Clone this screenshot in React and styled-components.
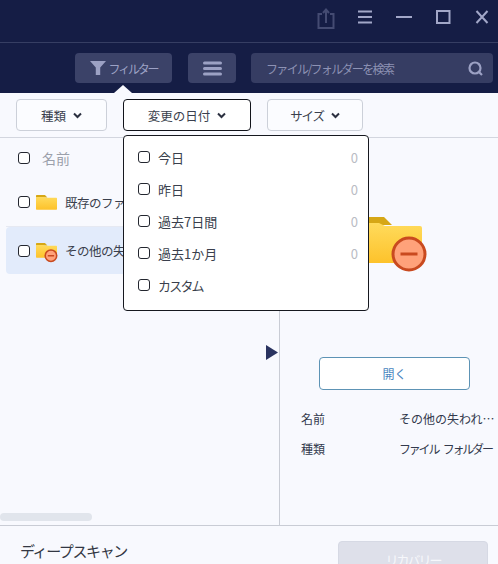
import styled, { createGlobalStyle } from "styled-components";

const GlobalStyle = createGlobalStyle`
  html, body {
    margin: 0;
    padding: 0;
    background: #f8f9fe;
  }
  * {
    box-sizing: border-box;
  }
`;

const Page = styled.div`
  position: relative;
  width: 498px;
  height: 564px;
  overflow: hidden;
  display: flex;
  flex-direction: column;
  background: #f8f9fe;
  color: #333a4d;
  font-family: "Noto Sans CJK JP", "Noto Sans", sans-serif;
  font-size: 12px;
`;

const Header = styled.header`
  height: 93px;
  flex: none;
  background: #151d45;
`;

const TitleBar = styled.div`
  height: 43px;
  border-bottom: 1px solid #363e63;
  display: flex;
  justify-content: flex-end;
  align-items: flex-start;
  padding: 5px 4px 0 0;
  gap: 15px;
`;

const WinIcon = styled.svg`
  width: 24px;
  height: 24px;
  flex: none;
  fill: none;
  stroke: ${(p) => p.$stroke || "#a2a7c8"};
  stroke-width: 2;
`;

const Toolbar = styled.div`
  display: flex;
  padding: 10px 5px 0 75px;
  gap: 16px;
`;

const ToolButton = styled.div`
  height: 30px;
  width: ${(p) => p.$width}px;
  border-radius: 4px;
  background: #3b4268;
  display: flex;
  align-items: center;
  justify-content: center;
  gap: 3px;
  color: #9ca1c4;
  font-size: 12px;
  letter-spacing: -2.200px;
`;

const SearchBox = styled.div`
  flex: 1;
  height: 30px;
  margin-left: -1px;
  border-radius: 4px;
  background: #363d63;
  display: flex;
  align-items: center;
  justify-content: space-between;
  padding: 0 10px 0 15px;
  color: #8d92b4;
  font-size: 12px;
  letter-spacing: -1.650px;
`;

const FilterRow = styled.div`
  height: 45px;
  flex: none;
  border-bottom: 1px solid #d3d6df;
  display: flex;
  align-items: flex-start;
  padding: 6px 0 0 16px;
  gap: 16px;
`;

const Chip = styled.div`
  height: 32px;
  width: ${(p) => p.$width}px;
  border: 1px solid ${(p) => (p.$active ? "#11131a" : "#ccd0d9")};
  border-radius: 4px;
  background: ${(p) => (p.$active ? "#fff" : "#fbfcff")};
  display: flex;
  align-items: center;
  justify-content: center;
  gap: 7px;
  font-size: 12.500px;
  letter-spacing: ${(p) => (p.$tight ? "-1.200px" : "0")};
  color: #3a3f4d;
`;

const Caret = styled.svg`
  width: 9px;
  height: 7px;
  fill: none;
  stroke: #2b3040;
  stroke-width: 2;
`;

const Body = styled.div`
  flex: 1;
  display: flex;
  min-height: 0;
`;

const LeftPane = styled.div`
  position: relative;
  width: 280px;
  flex: none;
  border-right: 1px solid #c9ccd5;
`;

const ListHeader = styled.div`
  height: 40px;
  display: flex;
  align-items: center;
  padding-left: 18px;
  gap: 12px;
  color: #9ba0ab;
  font-size: 14px;
  line-height: 18px;
`;

const Row = styled.div`
  height: ${(p) => (p.$selected ? 47 : 48)}px;
  margin-left: ${(p) => (p.$selected ? 6 : 0)}px;
  padding-left: ${(p) => (p.$selected ? 12 : 18)}px;
  border-radius: 4px 0 0 4px;
  background: ${(p) => (p.$selected ? "#e2ebfb" : "transparent")};
  display: flex;
  align-items: center;
  gap: 6px;
  font-size: 12.500px;
  color: #3a3f4d;
  white-space: nowrap;
  overflow: hidden;
`;

const RowLabel = styled.span`
  margin-left: 2px;
  letter-spacing: -0.500px;
`;

const RowDivider = styled.div`
  height: 1px;
  margin-left: 6px;
  background: #e6e9f2;
`;

const Check = styled.span`
  width: 12px;
  height: 12px;
  flex: none;
  display: block;
  border: 1.500px solid #23262f;
  border-radius: 3px;
  background: #fff;
`;

const Scrollbar = styled.div`
  position: absolute;
  left: 0;
  bottom: 4px;
  width: 92px;
  height: 8px;
  border-radius: 4px;
  background: #e1e5ec;
`;

const CollapseArrow = styled.div`
  position: absolute;
  right: 1px;
  top: 207px;
  width: 12px;
  height: 15px;
  background: #2a3360;
  clip-path: polygon(0 0, 100% 50%, 0 100%);
`;

const RightPane = styled.div`
  flex: 1;
  min-width: 0;
  display: flex;
  flex-direction: column;
  align-items: center;
  padding-top: 79px;
`;

const OpenButton = styled.div`
  margin-top: 94px;
  margin-left: 11px;
  width: 151px;
  height: 33px;
  border: 1px solid #5d93b5;
  border-radius: 4px;
  background: #fff;
  color: #4a86c0;
  font-size: 12px;
  display: flex;
  align-items: center;
  justify-content: center;
`;

const InfoList = styled.div`
  align-self: stretch;
  margin-top: 13px;
  padding-left: 21px;
`;

const InfoRow = styled.div`
  height: 30px;
  display: grid;
  grid-template-columns: 98px 1fr;
  align-items: center;
  font-size: 12px;
  color: #333a4d;
  white-space: nowrap;
`;

const InfoValue = styled.span`
  letter-spacing: ${(p) => (p.$tight ? "-2.200px" : "0")};
  word-spacing: ${(p) => (p.$tight ? "4px" : "0")};
`;

const Footer = styled.footer`
  height: 39px;
  flex: none;
  border-top: 1px solid #c9ccd5;
  display: flex;
  justify-content: space-between;
  align-items: flex-start;
  padding: 15px 10px 0 20px;
`;

const FooterTitle = styled.div`
  font-size: 15px;
  line-height: 20px;
  letter-spacing: -1.400px;
  color: #333743;
`;

const RecoverButton = styled.div`
  width: 150px;
  height: 40px;
  border: 1px solid #d6d9e4;
  border-radius: 4px;
  background: #dee0ea;
  color: #f6f7fb;
  font-size: 13px;
  letter-spacing: -2px;
  text-align: center;
  line-height: 36px;
`;

const PopArrow = styled.div`
  position: absolute;
  left: 114px;
  top: 85px;
  width: 18px;
  height: 8px;
  background: #f8f9fe;
  clip-path: polygon(50% 0, 100% 100%, 0 100%);
`;

const Dropdown = styled.div`
  position: absolute;
  left: 123px;
  top: 135px;
  width: 246px;
  height: 176px;
  background: #fff;
  border: 1px solid #16181f;
  border-radius: 4px;
  padding: 5px 10px 0 14px;
`;

const Option = styled.div`
  height: 32px;
  display: flex;
  align-items: center;
  gap: 8px;
  font-size: 13px;
  color: #3a3f4d;
`;

const OptionLabel = styled.span`
  letter-spacing: ${(p) => (p.$tight ? "-1.800px" : "0")};
`;

const Count = styled.span`
  margin-left: auto;
  color: #b9bcc4;
  font-size: 13px;
`;

function Folder({ size, badge, small }) {
  return (
    <svg width={size} height={(size * 46) / 66} viewBox="0 0 66 46" style={{ flex: "none", overflow: "visible" }}>
      <defs>
        <linearGradient id={`fold${size}`} x1="0" y1="0" x2="0" y2="1">
          <stop offset="0" stopColor="#ffdb5c" />
          <stop offset="1" stopColor="#fdc22b" />
        </linearGradient>
      </defs>
      <path d="M0 2a2 2 0 0 1 2-2h26l8 8H0z" fill="#d6a716" />
      <path d="M0 9a3 3 0 0 1 3-3h20l6 3 h35a2 2 0 0 1 2 2v33a2 2 0 0 1-2 2H2a2 2 0 0 1-2-2z" fill={`url(#fold${size})`} />
      {badge && (
        <g>
          <circle cx={small ? 47 : 53} cy={small ? 40 : 37} r={small ? 18 : 16} fill="#ffa27a" stroke="#c94a1f" strokeWidth={small ? 5 : 3} />
          <path d={small ? "M37 40h20" : "M44.500 37h17"} stroke="#c94a1f" strokeWidth={small ? 5 : 3} />
        </g>
      )}
    </svg>
  );
}

function ChipCaret() {
  return (
    <Caret viewBox="0 0 9 7">
      <path d="M1 1.500l3.500 3.500L8 1.500" />
    </Caret>
  );
}

const dateOptions = [
  { label: "今日" },
  { label: "昨日" },
  { label: "過去7日間" },
  { label: "過去1か月" },
  { label: "カスタム", tight: true },
];

export default function App() {
  return (
    <Page>
      <GlobalStyle />
      <Header>
        <TitleBar>
          <WinIcon viewBox="0 0 24 24" $stroke="#444b72">
            <path d="M8 9H4.500v14h15V9H16M12 18V5M9 8l3-3.500L15 8" />
          </WinIcon>
          <WinIcon viewBox="0 0 24 24">
            <path d="M5 6.500h14M5 12h14M5 17.500h14" />
          </WinIcon>
          <WinIcon viewBox="0 0 24 24">
            <path d="M4 12h16" />
          </WinIcon>
          <WinIcon viewBox="0 0 24 24">
            <path d="M6 6h12.500v12H6z" />
          </WinIcon>
          <WinIcon viewBox="0 0 24 24">
            <path d="M6.500 6l11 12M17.500 6l-11 12" />
          </WinIcon>
        </TitleBar>
        <Toolbar>
          <ToolButton $width={97}>
            <svg width="16" height="16" viewBox="0 0 18 16">
              <path d="M0 0h18l-6.500 7.500V16h-5V7.500z" fill="#9ca1c4" />
            </svg>
            フィルター
          </ToolButton>
          <ToolButton $width={48}>
            <svg width="19" height="15" viewBox="0 0 19 15">
              <path d="M1.500 2h16M1.500 7.500h16M1.500 13h16" stroke="#9ca1c4" strokeWidth="3" strokeLinecap="round" />
            </svg>
          </ToolButton>
          <SearchBox>
            ファイル/フォルダーを検索
            <svg width="15" height="15" viewBox="0 0 15 15" fill="none" stroke="#9ca1c4" strokeWidth="2.200">
              <circle cx="7" cy="7" r="5.500" />
              <path d="M11 11l3 3" />
            </svg>
          </SearchBox>
        </Toolbar>
      </Header>
      <FilterRow>
        <Chip $width={91}>種類<ChipCaret /></Chip>
        <Chip $width={128} $active>変更の日付<ChipCaret /></Chip>
        <Chip $width={96} $tight>サイズ<ChipCaret /></Chip>
      </FilterRow>
      <Body>
        <LeftPane>
          <ListHeader>
            <Check />
            名前
          </ListHeader>
          <Row>
            <Check />
            <Folder size={21} />
            <RowLabel>既存のファイル</RowLabel>
          </Row>
          <RowDivider />
          <Row $selected>
            <Check />
            <Folder size={21} badge small />
            <RowLabel>その他の失われたファイル</RowLabel>
          </Row>
          <Scrollbar />
          <CollapseArrow />
        </LeftPane>
        <RightPane>
          <Folder size={66} badge />
          <OpenButton>開く</OpenButton>
          <InfoList>
            <InfoRow><span>名前</span><InfoValue>その他の失われ…</InfoValue></InfoRow>
            <InfoRow><span>種類</span><InfoValue $tight>ファイル フォルダー</InfoValue></InfoRow>
          </InfoList>
        </RightPane>
      </Body>
      <Footer>
        <FooterTitle>ディープスキャン</FooterTitle>
        <RecoverButton>リカバリー</RecoverButton>
      </Footer>
      <PopArrow />
      <Dropdown>
        {dateOptions.map((opt, i) => (
          <Option key={opt.label}>
            <Check />
            <OptionLabel $tight={opt.tight}>{opt.label}</OptionLabel>
            {i < 4 && <Count>0</Count>}
          </Option>
        ))}
      </Dropdown>
    </Page>
  );
}
